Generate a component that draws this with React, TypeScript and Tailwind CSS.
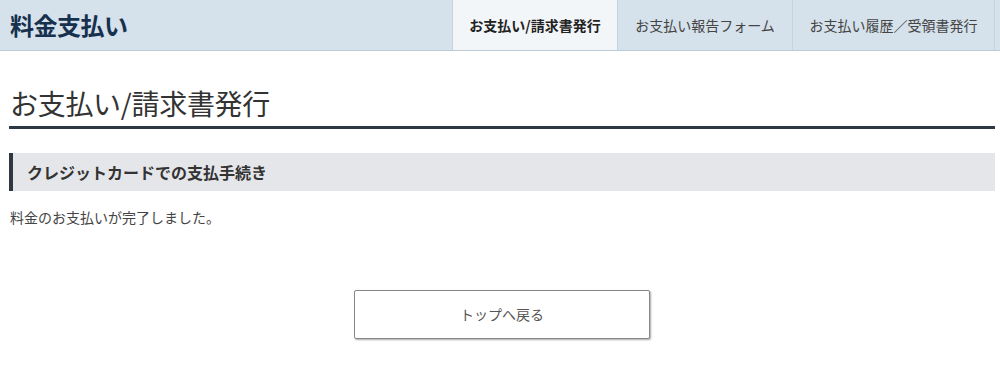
import React from "react";

const font = { fontFamily: '"Noto Sans CJK JP", "Noto Sans", sans-serif' };

export default function App() {
  return (
    <div className="w-[1000px] h-[371px] bg-white overflow-hidden" style={font}>
      <header className="h-[51px] bg-[#d5e1eb] border-b border-[#bccbd8] flex items-stretch">
        <div className="pl-[10px] flex items-center text-[24px] font-bold text-[#16304d] leading-none tracking-[-0.5px]">
          料金支払い
        </div>
        <nav className="ml-auto flex items-stretch">
          <div className="w-[165px] flex items-center justify-center bg-[#f3f6f9] border-l border-[#c6d3de] text-[14px] font-bold text-[#222]">
            お支払い/請求書発行
          </div>
          <div className="w-[175px] flex items-center justify-center border-l border-[#c6d3de] text-[14px] text-[#444]">
            お支払い報告フォーム
          </div>
          <div className="w-[203px] flex items-center justify-center border-l border-r border-[#c6d3de] text-[14px] text-[#444]">
            お支払い履歴／受領書発行
          </div>
          <div className="w-[5px]" />
        </nav>
      </header>
      <main className="ml-[9px] w-[986px]">
        <h1 className="mt-[34px] pb-[5px] border-b-[3px] border-[#2d3845] text-[28px] leading-[36px] font-normal text-[#333] pl-[1px] tracking-[-0.3px]">
          お支払い/請求書発行
        </h1>
        <h2 className="mt-[24px] h-[38px] flex items-center bg-[#e5e6e9] border-l-[4px] border-[#2e3742] pl-[14px] text-[16px] font-bold text-[#333]">
          クレジットカードでの支払手続き
        </h2>
        <p className="mt-[14px] text-[14px] leading-[24px] text-[#444] pl-[1px]">料金のお支払いが完了しました。</p>
        <div className="mt-[61px] flex justify-center">
          <button className="w-[296px] h-[49px] bg-white border border-[#888] rounded-[2px] shadow-[1px_1px_2px_rgba(0,0,0,0.35)] text-[14px] text-[#555] flex items-center justify-center">
            トップへ戻る
          </button>
        </div>
      </main>
    </div>
  );
}
